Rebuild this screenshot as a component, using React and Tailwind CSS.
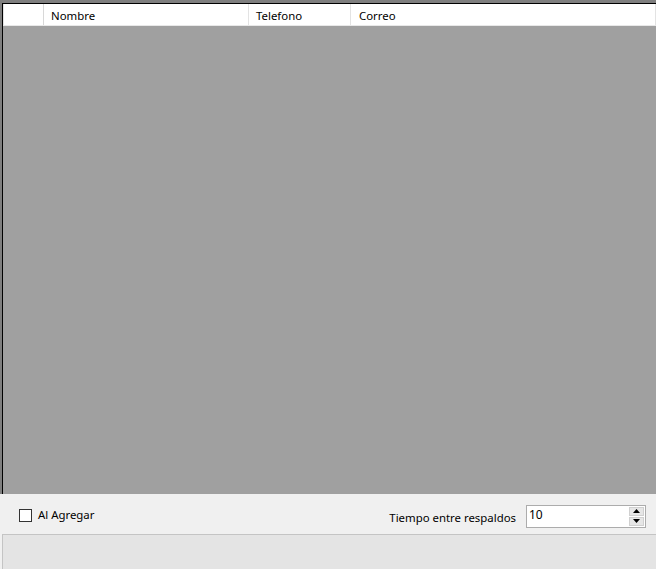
import React from 'react';

const font = { fontFamily: '"Noto Sans", "Open Sans", sans-serif' };

const columns = [
  { label: 'Nombre', width: 'w-[205px]', pad: 'pl-[7px]' },
  { label: 'Telefono', width: 'w-[102px]', pad: 'pl-[7px]' },
  { label: 'Correo', width: 'flex-1', pad: 'pl-[8px]' },
];

const SpinButtons = () => (
  <div className="flex flex-col w-[15px] h-[19px] mr-[1px] gap-[1px]">
    <div className="flex-1 bg-[#e6e6e6] border border-[#d0d0d0] flex items-center justify-center">
      <svg width="7" height="4" viewBox="0 0 7 4"><path d="M3.5 0 L7 4 L0 4 Z" fill="#000" /></svg>
    </div>
    <div className="flex-1 bg-[#e6e6e6] border border-[#d0d0d0] flex items-center justify-center">
      <svg width="7" height="4" viewBox="0 0 7 4"><path d="M0 0 L7 0 L3.5 4 Z" fill="#000" /></svg>
    </div>
  </div>
);

export default function App() {
  return (
    <div className="w-[656px] h-[569px] bg-[#f0f0f0] flex flex-col overflow-hidden text-[11.4px] text-black" style={font}>
      {/* Grid */}
      <div className="h-[494px] bg-[#7f7f7f] pl-[2px] pt-[3px] flex">
        <div className="flex-1 border-l border-t border-black bg-[#a0a0a0] flex flex-col">
          <div className="h-[22px] bg-white flex border-b border-[#e8e8e8]">
            <div className="w-[41px] border-l border-[#e3e3e3] border-r border-r-[#d8d8d8]" />
            {columns.map((c) => (
              <div key={c.label} className={`${c.width} ${c.pad} flex items-center border-r border-[#e3e3e3] leading-none pt-[2px]`}>
                {c.label}
              </div>
            ))}
          </div>
        </div>
      </div>

      {/* Options */}
      <div className="h-[40px] flex items-center pl-[19px] pr-[10px] pt-[2px]">
        <div className="flex items-center gap-[6px]">
          <div className="w-[13px] h-[13px] border border-[#333] bg-white" />
          <span className="leading-none">Al Agregar</span>
        </div>
        <div className="ml-auto flex items-center gap-[10px]">
          <span className="leading-none pt-[5px]">Tiempo entre respaldos</span>
          <div className="w-[120px] h-[23px] mt-[2px] border border-[#acacac] bg-white flex items-center justify-between">
            <span className="pl-[2px] leading-none pb-[3px] text-[12px]">10</span>
            <SpinButtons />
          </div>
        </div>
      </div>

      {/* Status */}
      <div className="flex-1 ml-[2px] bg-[#e4e4e4] border-t border-l border-[#c4c4c4]" />
    </div>
  );
}
